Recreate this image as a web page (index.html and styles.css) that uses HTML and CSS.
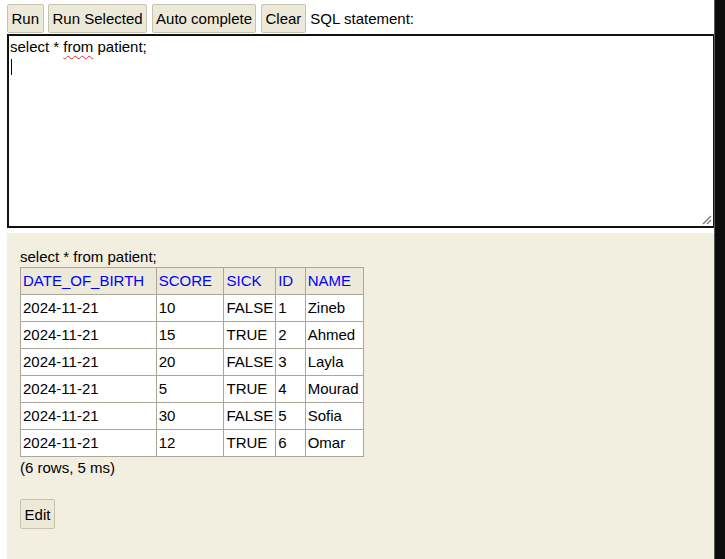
FILE: index.html
```html
<!DOCTYPE html>
<html>
<head>
<meta charset="utf-8">
<link rel="stylesheet" href="styles.css">
</head>
<body>
<div class="frame">
  <div class="main">
    <div class="toolbar">
      <button class="btn">Run</button>
      <button class="btn">Run Selected</button>
      <button class="btn">Auto complete</button>
      <button class="btn">Clear</button>
      <span class="label">SQL statement:</span>
    </div>
    <div class="editor">
      <div class="line">select * <span class="misspelt">from</span> patient;</div>
      <div class="line"><span class="caret"></span></div>
      <svg class="grip" width="10" height="10" viewBox="0 0 10 10">
        <line x1="1" y1="9" x2="9" y2="1" stroke="#777" stroke-width="1.2"/>
        <line x1="5" y1="9" x2="9" y2="5" stroke="#777" stroke-width="1.2"/>
      </svg>
    </div>
    <div class="result">
      <div class="stmt">select * from patient;</div>
      <table class="grid">
        <tr><th>DATE_OF_BIRTH</th><th>SCORE</th><th>SICK</th><th>ID</th><th>NAME</th></tr>
        <tr><td>2024-11-21</td><td>10</td><td>FALSE</td><td>1</td><td>Zineb</td></tr>
        <tr><td>2024-11-21</td><td>15</td><td>TRUE</td><td>2</td><td>Ahmed</td></tr>
        <tr><td>2024-11-21</td><td>20</td><td>FALSE</td><td>3</td><td>Layla</td></tr>
        <tr><td>2024-11-21</td><td>5</td><td>TRUE</td><td>4</td><td>Mourad</td></tr>
        <tr><td>2024-11-21</td><td>30</td><td>FALSE</td><td>5</td><td>Sofia</td></tr>
        <tr><td>2024-11-21</td><td>12</td><td>TRUE</td><td>6</td><td>Omar</td></tr>
      </table>
      <div class="count">(6 rows, 5 ms)</div>
      <button class="btn edit">Edit</button>
    </div>
  </div>
  <div class="sidebar"></div>
</div>
</body>
</html>
```

FILE: styles.css
```css
html, body {
  margin: 0;
  padding: 0;
  background: #ffffff;
  font-family: "Liberation Sans", Arial, sans-serif;
  font-size: 15px;
  color: #000;
  overflow: hidden;
}
.frame {
  display: flex;
  height: 559px;
  overflow: hidden;
}
.main {
  flex: 1 1 auto;
  display: flex;
  flex-direction: column;
  padding-left: 7px;
  min-width: 0;
  background: #ffffff;
}
.sidebar {
  flex: 0 0 11px;
  box-sizing: border-box;
  background-color: #0c0c0c;
  border-left: 1px solid #5a5a5a;
}
.toolbar {
  display: flex;
  align-items: center;
  gap: 4.5px;
  padding: 4px 0 1px;
}
.btn {
  font-family: "Liberation Sans", Arial, sans-serif;
  font-size: 15px;
  height: 29px;
  padding: 0 3.5px;
  margin: 0;
  background: #ece9d8;
  border: 1px solid #c6c2b0;
  border-radius: 2px;
  color: #000;
  line-height: 27px;
}
.label {
  line-height: 29px;
}
.editor {
  position: relative;
  height: 194px;
  border: 2px solid #111;
  border-right-width: 1px;
  box-sizing: border-box;
  background: #fff;
  padding: 1px 1px;
}
.line {
  height: 17px;
  line-height: 17px;
  margin-top: 1px;
}
.misspelt {
  text-decoration: underline wavy #e03030;
  text-decoration-thickness: 1.3px;
  text-underline-offset: 3px;
}
.caret {
  display: inline-block;
  width: 1px;
  height: 16px;
  background: #000;
  vertical-align: top;
  margin-left: 1px;
  margin-top: 3px;
}
.grip {
  position: absolute;
  right: 1px;
  bottom: 1px;
}
.result {
  margin-top: 5px;
  flex: 1;
  background: #f2eee0;
  padding: 15px 13px 0;
}
.stmt {
  line-height: 18px;
  margin-bottom: 1px;
}
.grid {
  border-collapse: collapse;
  background: #ffffff;
}
.grid th, .grid td {
  border: 1px solid #aaa79a;
  padding: 4px 2px;
  line-height: 18px;
  text-align: left;
  font-weight: normal;
  white-space: nowrap;
}
.grid th {
  background: #ece9d8;
  color: #0000ff;
  padding-right: 11.5px;
}
.count {
  margin-top: 2px;
  line-height: 18px;
}
.edit {
  margin-top: 22px;
  height: 30px;
  width: 35px;
  padding: 0;
  text-align: center;
}
```
